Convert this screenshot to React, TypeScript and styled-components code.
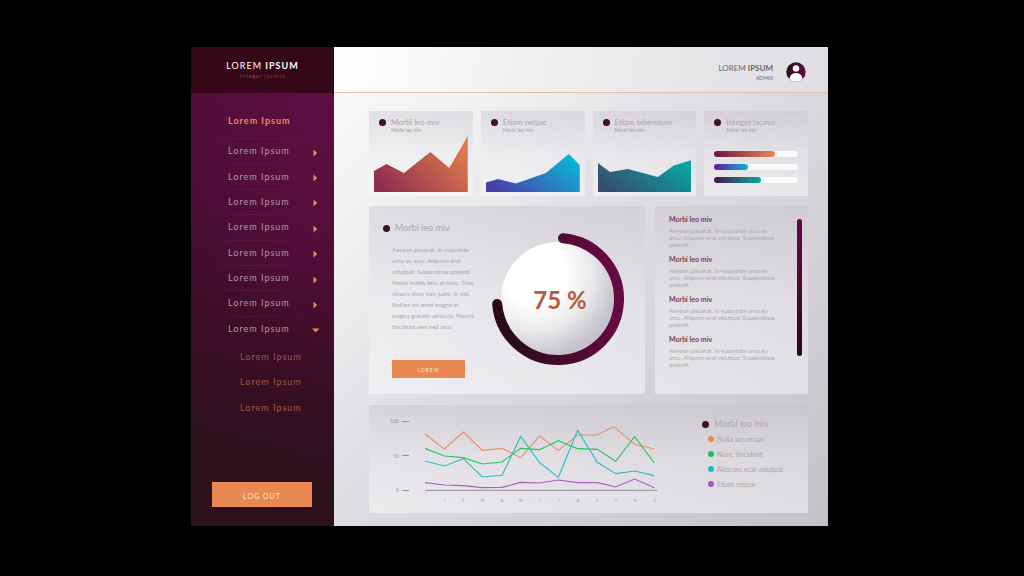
import React from 'react';
import styled, { createGlobalStyle } from 'styled-components';

const GlobalStyle = createGlobalStyle`
  *, *::before, *::after { box-sizing: border-box; }
  html, body { margin: 0; background: #000; }
  body, button { font-family: Lato, "Open Sans", sans-serif; }
  h1, h2, h3, p, ul { margin: 0; padding: 0; font-weight: 400; }
  ul { list-style: none; }
  svg { display: block; }
`;

const Page = styled.div`
  display: flex;
  min-height: 100vh;
  padding: 47px 196px 50px 191px;
`;

const Shell = styled.div`
  flex: 1;
  display: grid;
  grid-template-columns: 143px minmax(0, 1fr);
`;

const Sidebar = styled.aside`
  display: flex;
  flex-direction: column;
  background:
    radial-gradient(ellipse 170px 260px at 100% 12%, rgba(96, 14, 66, 0.8), rgba(96, 14, 66, 0) 100%),
    linear-gradient(195deg, #520d3a 10%, #480d33 42%, #3c0d26 62%, #2c111c 84%, #2c101c 100%);
`;

const Brand = styled.header`
  height: 46px;
  padding-top: 12px;
  text-align: center;
  background: linear-gradient(90deg, #370717, #330717);
`;

const BrandName = styled.h1`
  color: #fff;
  font-size: 9px;
  line-height: 13px;
  letter-spacing: 1px;
`;

const BrandTag = styled.p`
  color: #9c4638;
  font-size: 5px;
  line-height: 8px;
  letter-spacing: 1px;
`;

const NavHeading = styled.a`
  padding: 21px 0 10px 37px;
  color: #ee8a55;
  font-size: 9px;
  font-weight: 700;
  line-height: 14px;
  letter-spacing: 1px;
  text-decoration: none;
`;

const NavList = styled.ul`
  display: grid;
  grid-auto-rows: 1fr;
  height: 203px;
`;

const NavItem = styled.li`
  display: flex;
  background: linear-gradient(90deg, transparent 10%, rgba(160, 60, 70, 0.22) 40%, transparent 90%) top / 100% 1px no-repeat;
`;

const NavLink = styled.a`
  flex: 1;
  display: flex;
  align-items: center;
  justify-content: space-between;
  padding: 0 14px 0 37px;
  color: #b795ab;
  font-size: 9px;
  letter-spacing: 1px;
  text-decoration: none;
`;

const Arrow = styled.svg`
  width: 9px;
  height: 8px;
  margin-top: 4px;
  fill: #ee8a55;
`;

const SubList = styled(NavList)`
  height: 76px;
  margin-top: 3px;
`;

const SubLink = styled.a`
  display: flex;
  align-items: center;
  height: 100%;
  padding-left: 49px;
  color: #a4563f;
  font-size: 9px;
  letter-spacing: 1px;
  text-decoration: none;
`;

const ActionButton = styled.button<{ $large?: boolean }>`
  height: ${(p) => (p.$large ? 25 : 18)}px;
  padding: 2px 0 0;
  border: 0;
  background: #ea8852;
  color: #fdeadb;
  font-size: ${(p) => (p.$large ? 7 : 5)}px;
  letter-spacing: 1px;
  cursor: pointer;
`;

const LogOut = styled(ActionButton)`
  margin: auto 22px 19px 21px;
`;

const Main = styled.main`
  min-width: 0;
  background: linear-gradient(135deg, #fcfcfc 0%, #f1f1f2 20%, #dfdde2 46%, #d2cfd5 72%, #c4c1c7 100%);
`;

const TopBar = styled.header`
  display: flex;
  align-items: center;
  justify-content: flex-end;
  gap: 13px;
  height: 46px;
  padding: 4px 22px 0 0;
  border-bottom: 1px solid #e9bda9;
  background: linear-gradient(100deg, #fdfdfd 5%, #f0f0f1 40%, #dfdde2 100%);
`;

const User = styled.div`
  text-align: right;
  color: #69656a;
`;

const UserName = styled.p`
  font-size: 8px;
  line-height: 12px;
`;

const UserRole = styled.p`
  font-size: 5px;
  line-height: 8px;
`;

const Content = styled.div`
  display: grid;
  gap: 10px;
  padding: 18px 20px 13px 35px;
`;

const CardRow = styled.section`
  display: grid;
  grid-template-columns: repeat(4, minmax(0, 1fr));
  gap: 8px;
`;

const Panel = styled.section`
  background: linear-gradient(180deg, rgba(196, 192, 200, 0.42), rgba(236, 235, 239, 0.5) 50%, rgba(255, 255, 255, 0.44));
`;

const Card = styled(Panel)`
  display: flex;
  flex-direction: column;
  height: 85px;
  padding: 5px 5px 4px;
`;

const TitleRow = styled.header`
  display: flex;
  align-items: center;
  gap: 5px;
  padding-left: 5px;
`;

const Dot = styled.span<{ $color?: string; $small?: boolean }>`
  flex: none;
  width: ${(p) => (p.$small ? 6 : 7)}px;
  height: ${(p) => (p.$small ? 6 : 7)}px;
  border-radius: 50%;
  background: ${(p) => p.$color ?? '#430d29'};
`;

const CardTitle = styled.h2`
  color: #aba7ac;
  font-size: 8px;
  line-height: 12px;
  white-space: nowrap;
`;

const PanelTitle = styled(CardTitle)`
  font-size: 9px;
`;

const CardNote = styled.p`
  padding-left: 17px;
  color: #a5a1a7;
  font-size: 5px;
  line-height: 4px;
`;

const AreaSvg = styled.svg`
  width: 100%;
  height: 56px;
  margin-top: auto;
`;

const Bars = styled.div`
  display: grid;
  gap: 7px;
  margin: auto 5px 9px;
`;

const Track = styled.div`
  height: 6px;
  border-radius: 3px;
  background: #fbfafb;
`;

const Fill = styled.div<{ $from: string; $to: string }>`
  height: 100%;
  border-radius: 3px;
  background: linear-gradient(90deg, ${(p) => p.$from}, ${(p) => p.$to});
`;

const MiddleRow = styled.div`
  display: grid;
  grid-template-columns: minmax(0, 276fr) minmax(0, 153fr);
  gap: 10px;
`;

const Progress = styled(Panel)`
  display: flex;
  justify-content: space-between;
  height: 188px;
  padding: 16px 19px 16px 14px;
`;

const Story = styled.div`
  display: flex;
  flex-direction: column;
`;

const StoryTitle = styled(TitleRow)`
  padding-left: 0;
`;

const StoryText = styled.p`
  padding: 10px 0 0 9px;
  color: #aba7ae;
  font-size: 6px;
  line-height: 11px;
  white-space: pre-line;
`;

const StoryButton = styled(ActionButton)`
  width: 73px;
  margin: auto 0 0 9px;
`;

const Gauge = styled.svg`
  flex: none;
  width: 136px;
  height: 136px;
  margin-top: 9px;
`;

const News = styled(Panel)`
  display: flex;
  justify-content: space-between;
  padding: 8px 6px 8px 14px;
`;

const NewsItem = styled.article`
  height: 40px;
`;

const NewsTitle = styled.h3`
  color: #793d57;
  font-size: 7px;
  font-weight: 700;
  line-height: 10px;
`;

const NewsText = styled.p`
  padding-top: 3px;
  color: #aeaab1;
  font-size: 6px;
  line-height: 7px;
  white-space: pre-line;
`;

const ScrollThumb = styled.div`
  width: 5px;
  height: 137px;
  margin-top: 5px;
  border-radius: 3px;
  background: linear-gradient(180deg, #610a46, #4d0b36 40%, #220b15);
`;

const Trend = styled(Panel)`
  display: grid;
  grid-template-columns: 40px minmax(0, 239fr) minmax(0, 128fr);
  gap: 0 16px;
  height: 108px;
  margin-top: 1px;
`;

const YAxis = styled.ul`
  display: flex;
  flex-direction: column;
  justify-content: space-between;
  height: 77px;
  margin-top: 12px;
`;

const YLabel = styled.li`
  display: flex;
  align-items: center;
  justify-content: flex-end;
  gap: 3px;
  color: #9b979d;
  font-size: 5px;
  line-height: 8px;

  &::after {
    content: '';
    width: 7px;
    height: 1px;
    background: #9b979d;
  }
`;

const Plot = styled.div`
  min-width: 0;
  padding-top: 16px;
`;

const LineSvg = styled.svg`
  width: 100%;
  height: 76px;
`;

const Months = styled.ul`
  display: grid;
  grid-template-columns: repeat(12, 1fr);
  margin-left: 10px;
  color: #a19da4;
  font-size: 4px;
  line-height: 8px;
  text-align: center;
`;

const Legend = styled.div`
  padding: 13px 0 0 22px;
`;

const LegendList = styled.ul`
  display: grid;
  grid-auto-rows: 1fr;
  height: 59px;
  margin-top: 2px;
  padding-left: 6px;
`;

const LegendItem = styled.li`
  display: flex;
  align-items: center;
  gap: 3px;
  color: #aba7ae;
  font-size: 7px;
  line-height: 8px;
  white-space: nowrap;
`;

const areaCards = [
  { id: 'a', title: 'Morbi leo miv', from: '#8c2e4c', to: '#e17a4c', points: '0,35 12.5,28 30,37 56.5,16 75.5,32 94,0 94,56 0,56' },
  { id: 'b', title: 'Etiam neque', from: '#4a3ca9', to: '#0cb4d4', points: '0,46.5 12,43 30,47.5 60,37 83,18 94,29 94,56 0,56' },
  { id: 'c', title: 'Etiam bibendum', from: '#394a6b', to: '#06a5a2', points: '0,27 12,36 30,33 60,41 76,29.5 94,24 94,56 0,56' },
];

const bars = [
  { from: '#6a1444', to: '#ea8852', value: 72 },
  { from: '#6417a8', to: '#0ab4d3', value: 40 },
  { from: '#4a1546', to: '#08aaa4', value: 56 },
];

const lines = [
  { color: '#ea9064', points: '180,102 238,147 295,96 352,151 411,145 467,173 524,108 580,151 638,105 697,105 746,80 809,133 868,147' },
  { color: '#29c45b', points: '180,145 238,168 295,173 352,192 411,186 467,145 524,149 580,122 638,146 697,148 752,184 809,110 868,189' },
  { color: '#2abfc8', points: '180,183 238,198 295,176 352,231 411,226 467,110 524,188 580,232 638,91 697,187 752,221 809,213 868,227' },
  { color: '#b25ac6', points: '180,248 238,255 295,257 352,263 411,262 467,247 524,249 580,240 638,248 697,248 752,261 809,237 868,263' },
];

const legend = [
  ['#ea8852', 'Nulla accumsan'],
  ['#19c152', 'Nunc tincidunt'],
  ['#17bcc6', 'Aliquam erat volutpat'],
  ['#b04fc6', 'Etiam neque'],
];

const storyText = `Aenean placerat. In vulputate
urna eu arcu. Aliquam erat
volutpat. Suspendisse potenti.
Morbi mattis felis at nunc. Duis
viverra diam non justo. In nisl.
Nullam sit amet magna in
magna gravida vehicula. Mauris
tincidunt sem sed arcu.`;

const newsText = `Aenean placerat. In vulputate urna eu
arcu. Aliquam erat volutpat. Suspendisse
potenti.`;

export default function App() {
  return (
    <>
      <GlobalStyle />
      <Page>
        <Shell>
          <Sidebar>
            <Brand>
              <BrandName>LOREM <b>IPSUM</b></BrandName>
              <BrandTag>Integer lacinia</BrandTag>
            </Brand>
            <NavHeading href="#home">Lorem Ipsum</NavHeading>
            <NavList>
              {Array.from({ length: 8 }, (_, i) => (
                <NavItem key={i}>
                  <NavLink href={`#section-${i + 1}`}>
                    Lorem Ipsum
                    <Arrow viewBox="0 0 9 8" aria-hidden="true">
                      <path d={i === 7 ? 'M1 2.5H8.5L4.8 6.2Z' : 'M2.5 .5V7.5L6.2 4Z'} />
                    </Arrow>
                  </NavLink>
                </NavItem>
              ))}
            </NavList>
            <SubList>
              {[1, 2, 3].map((n) => (
                <li key={n}><SubLink href={`#sub-${n}`}>Lorem Ipsum</SubLink></li>
              ))}
            </SubList>
            <LogOut type="button" $large>LOG OUT</LogOut>
          </Sidebar>

          <Main>
            <TopBar>
              <User>
                <UserName>LOREM <b>IPSUM</b></UserName>
                <UserRole>ADMIN</UserRole>
              </User>
              <svg width="20" height="20" viewBox="0 0 20 20" aria-hidden="true">
                <defs>
                  <linearGradient id="avatar">
                    <stop offset="0" stopColor="#2b0b1b" />
                    <stop offset="1" stopColor="#600c46" />
                  </linearGradient>
                  <clipPath id="avatarClip"><circle cx="10" cy="10" r="9.7" /></clipPath>
                </defs>
                <g clipPath="url(#avatarClip)">
                  <rect width="20" height="20" fill="url(#avatar)" />
                  <circle cx="10" cy="6.4" r="3.2" fill="#fff" />
                  <path d="M3.6 20V15.8C4.4 12.6 6.8 10.9 10 10.9S15.6 12.6 16.4 15.8V20Z" fill="#fff" />
                </g>
              </svg>
            </TopBar>

            <Content>
              <CardRow>
                {areaCards.map((c) => (
                  <Card key={c.id}>
                    <TitleRow><Dot /><CardTitle>{c.title}</CardTitle></TitleRow>
                    <CardNote>Morbi leo miv</CardNote>
                    <AreaSvg viewBox="0 0 94 56" preserveAspectRatio="none" aria-hidden="true">
                      <defs>
                        <linearGradient id={`area-${c.id}`} x1="0" y1="0.8" x2="1" y2="0.3">
                          <stop offset="0" stopColor={c.from} />
                          <stop offset="1" stopColor={c.to} />
                        </linearGradient>
                      </defs>
                      <polygon points={c.points} fill={`url(#area-${c.id})`} />
                    </AreaSvg>
                  </Card>
                ))}
                <Card>
                  <TitleRow><Dot /><CardTitle>Integer lacinia</CardTitle></TitleRow>
                  <CardNote>Morbi leo miv</CardNote>
                  <Bars>
                    {bars.map((b) => (
                      <Track key={b.value}>
                        <Fill $from={b.from} $to={b.to} style={{ width: `${b.value}%` }} />
                      </Track>
                    ))}
                  </Bars>
                </Card>
              </CardRow>

              <MiddleRow>
                <Progress>
                  <Story>
                    <StoryTitle><Dot /><PanelTitle>Morbi leo miv</PanelTitle></StoryTitle>
                    <StoryText>{storyText}</StoryText>
                    <StoryButton type="button">LOREM</StoryButton>
                  </Story>
                  <Gauge viewBox="0 0 136 136" role="img" aria-label="75 %">
                    <defs>
                      <linearGradient id="ring" x1="0" y1="0.6" x2="1" y2="0.4">
                        <stop offset="0" stopColor="#280b18" />
                        <stop offset="0.45" stopColor="#440b2c" />
                        <stop offset="0.9" stopColor="#650943" />
                      </linearGradient>
                      <radialGradient id="ball" cx="0.3" cy="0.28" r="0.78">
                        <stop offset="0.35" stopColor="#fff" />
                        <stop offset="0.65" stopColor="#e9e8eb" />
                        <stop offset="0.9" stopColor="#cac6cd" />
                        <stop offset="1" stopColor="#c4c0c8" />
                      </radialGradient>
                    </defs>
                    <circle cx="68" cy="68" r="57" fill="url(#ball)" />
                    <path d="M73 7.2A61 61 0 1 1 7.2 73" fill="none" stroke="url(#ring)" strokeWidth="10" strokeLinecap="round" />
                    <text x="70" y="78" textAnchor="middle" fill="#b9593a" fontSize="24" fontWeight="700">75 %</text>
                  </Gauge>
                </Progress>

                <News>
                  <div>
                    {[1, 2, 3, 4].map((n) => (
                      <NewsItem key={n}>
                        <NewsTitle>Morbi leo miv</NewsTitle>
                        <NewsText>{newsText}</NewsText>
                      </NewsItem>
                    ))}
                  </div>
                  <ScrollThumb />
                </News>
              </MiddleRow>

              <Trend>
                <YAxis>
                  <YLabel>100</YLabel>
                  <YLabel>50</YLabel>
                  <YLabel>0</YLabel>
                </YAxis>
                <Plot>
                  <LineSvg viewBox="180 63 717 228" preserveAspectRatio="none" aria-hidden="true">
                    <path d="M180 271H876" stroke="#928e94" strokeWidth="3" />
                    {lines.map((l) => (
                      <polyline key={l.color} points={l.points} fill="none" stroke={l.color} strokeWidth="3.4" />
                    ))}
                  </LineSvg>
                  <Months>
                    {'JFMAMJJASOND'.split('').map((m, i) => <li key={i}>{m}</li>)}
                  </Months>
                </Plot>
                <Legend>
                  <StoryTitle><Dot /><PanelTitle>Morbi leo miv</PanelTitle></StoryTitle>
                  <LegendList>
                    {legend.map(([color, name]) => (
                      <LegendItem key={name}><Dot $small $color={color} />{name}</LegendItem>
                    ))}
                  </LegendList>
                </Legend>
              </Trend>
            </Content>
          </Main>
        </Shell>
      </Page>
    </>
  );
}
